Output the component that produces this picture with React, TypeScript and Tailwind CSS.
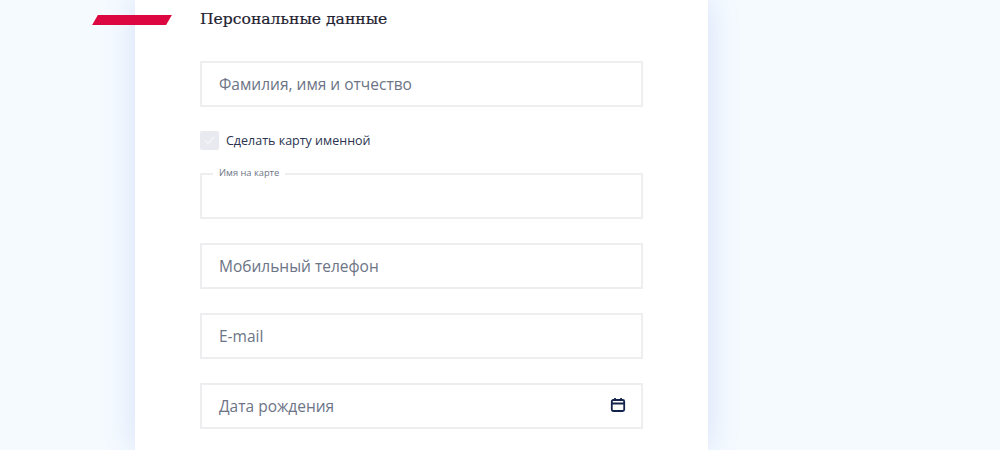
export default function App() {
  const field = "mt-6 flex h-[46px] w-[443px] items-center justify-between border-2 border-[#eeeef1] pl-[17px] pr-[15px] text-[15.5px] text-[#6c7485]";
  return (
    <div className="h-[450px] w-[1000px] overflow-hidden bg-[#f5faff] font-['Open_Sans',sans-serif]">
      <div className="relative ml-[135px] h-[450px] w-[573px] bg-white pl-[65px] shadow-[0_0_30px_rgba(90,125,220,0.2)]">
        <div className="absolute left-[-40px] top-[15px] h-[10px] w-[74px] skew-x-[-30deg] bg-[#dc0740]" />
        <h1 className="flex h-[39px] items-center pt-px font-['DejaVu_Serif',serif] text-[15.6px] font-normal text-[#1f2230] [-webkit-text-stroke:0.2px_#1f2230]">
          Персональные данные
        </h1>
        <div className="mt-[22px] flex h-[46px] w-[443px] items-center border-2 border-[#eeeef1] pl-[17px] pt-px text-[15.5px] text-[#6c7485]">
          Фамилия, имя и отчество
        </div>
        <div className="mt-6 flex h-[19px] items-center gap-[7px]">
          <div className="flex h-[19px] w-[19px] items-center justify-center rounded-[2px] bg-[#e9eaef]">
            <svg width="11" height="9" viewBox="0 0 11 9" fill="none" stroke="#f4f5f8" strokeWidth="1.3">
              <path d="M1 4.5 4 7.5 10 1" />
            </svg>
          </div>
          <span className="pt-px text-[12.5px] text-[#2b3350]">Сделать карту именной</span>
        </div>
        <div className="relative mt-[23px] h-[46px] w-[443px] border-2 border-[#eeeef1]">
          <span className="absolute left-[11px] top-[-8px] bg-white px-[6px] text-[9.3px] leading-[12px] text-[#6c7485]">
            Имя на карте
          </span>
        </div>
        <div className={field}><span className="pt-px">Мобильный телефон</span></div>
        <div className={field}><span className="pt-px">E-mail</span></div>
        <div className={field}>
          <span className="pt-px">Дата рождения</span>
          <svg className="-mt-[2px]" width="16" height="16" viewBox="0 0 16 16" fill="none" stroke="#14234b" strokeWidth="1.8">
            <rect x="1.8" y="3" width="12.4" height="11" rx="1.5" />
            <path d="M1.8 6.5h12.4M5 1v2.5M11 1v2.5" />
          </svg>
        </div>
      </div>
    </div>
  );
}
